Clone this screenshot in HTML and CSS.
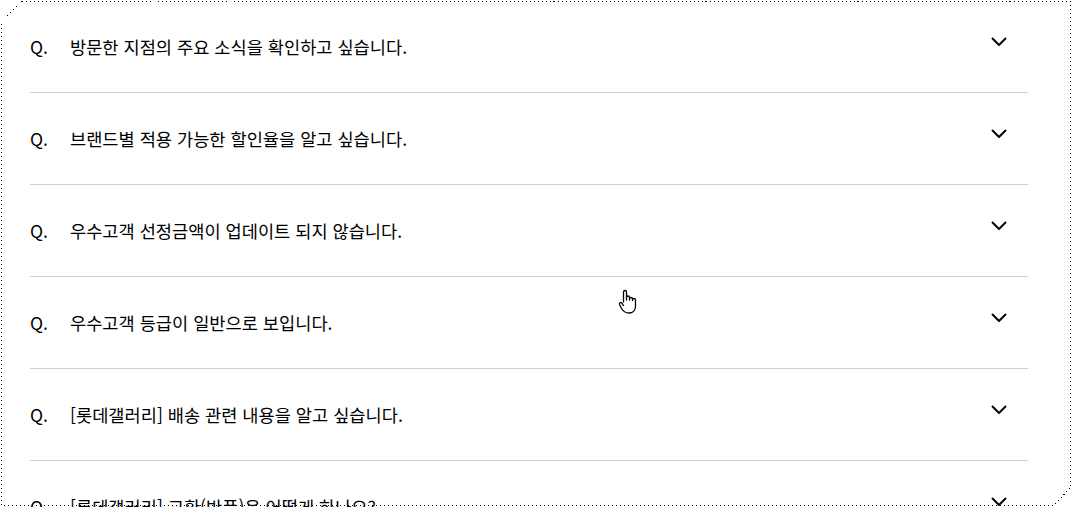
FILE: index.html
```html
<!DOCTYPE html>
<html lang="ko">
<head>
    <meta charset="UTF-8">
    <meta name="viewport" content="width=device-width, initial-scale=1.0">
    <title>자주 묻는 질문</title>
    <link rel="stylesheet" href="styles.css">
</head>
<body>
    <main class="page">
        <ul class="faq-list">
            <li class="faq-item">
                <span class="faq-q">Q.</span>
                <span class="faq-title">방문한 지점의 주요 소식을 확인하고 싶습니다.</span>
                <svg class="faq-toggle"><use href="#chevron-icon"></use></svg>
            </li>
            <li class="faq-item">
                <span class="faq-q">Q.</span>
                <span class="faq-title">브랜드별 적용 가능한 할인율을 알고 싶습니다.</span>
                <svg class="faq-toggle"><use href="#chevron-icon"></use></svg>
            </li>
            <li class="faq-item">
                <span class="faq-q">Q.</span>
                <span class="faq-title">우수고객 선정금액이 업데이트 되지 않습니다.</span>
                <svg class="faq-toggle"><use href="#chevron-icon"></use></svg>
            </li>
            <li class="faq-item">
                <span class="faq-q">Q.</span>
                <span class="faq-title">우수고객 등급이 일반으로 보입니다.</span>
                <svg class="faq-toggle"><use href="#chevron-icon"></use></svg>
            </li>
            <li class="faq-item">
                <span class="faq-q">Q.</span>
                <span class="faq-title">[롯데갤러리] 배송 관련 내용을 알고 싶습니다.</span>
                <svg class="faq-toggle"><use href="#chevron-icon"></use></svg>
            </li>
            <li class="faq-item">
                <span class="faq-q">Q.</span>
                <span class="faq-title">[롯데갤러리] 교환(반품)은 어떻게 하나요?</span>
                <svg class="faq-toggle"><use href="#chevron-icon"></use></svg>
            </li>
        </ul>
    </main>

    <!-- capture outline + pointer, drawn over the page -->
    <svg class="capture-frame" viewBox="0 0 1072 507">
        <polygon points="21.5,1.5 1070.5,1.5 1070.5,487.5 1053.5,505.5 1.5,505.5 1.5,21.5"/>
    </svg>
    <svg class="hand-cursor" viewBox="0 0 20 26">
        <path d="M5.5 13V3a1.5 1.5 0 0 1 3 0v8M8.5 10V8.5a1.5 1.5 0 0 1 3 0V11M11.5 10a1.5 1.5 0 0 1 3 0v1.5M14.5 11a1.5 1.5 0 0 1 3 0v6c0 4-2.5 7-6.5 7S5 22 3.5 19.5L1.5 15.5a1.4 1.4 0 0 1 2.4-1.4L5.5 16.5"/>
    </svg>

    <svg style="display: none;">
        <symbol id="chevron-icon" viewBox="0 0 16 9">
            <path d="M1 1l7 7 7-7"/>
        </symbol>
    </svg>
</body>
</html>
```

FILE: styles.css
```css
body {
    font-family: "Noto Sans CJK KR", "Noto Sans", sans-serif;
    background-color: #fff;
    color: #000;
    margin: 0;
    overflow: hidden;
}

.page {
    padding: 1px 44px 0 30px;
}

.faq-list {
    list-style: none;
    padding: 0;
    margin: 0;
}

.faq-item {
    display: flex;
    align-items: center;
    height: 91px;
    border-bottom: 1px solid #cfcfcf;
    font-size: 17.6px;
}

.faq-q {
    width: 40px;
    flex-shrink: 0;
}

.faq-title {
    flex: 1;
}

.faq-toggle {
    width: 16px;
    height: 9px;
    margin: 0 21px 10px 0;
    fill: none;
    stroke: #000;
    stroke-width: 2;
}

.capture-frame {
    position: absolute;
    top: 0;
    left: 0;
    width: 1072px;
    height: 507px;
    fill: none;
    stroke: #000;
    stroke-width: 1;
    stroke-dasharray: 1 3;
    shape-rendering: crispEdges;
    pointer-events: none;
}

.hand-cursor {
    position: absolute;
    top: 289px;
    left: 618px;
    width: 20px;
    height: 26px;
    fill: #fff;
    stroke: #000;
    stroke-width: 1.3;
    stroke-linejoin: round;
    stroke-linecap: round;
}
```
